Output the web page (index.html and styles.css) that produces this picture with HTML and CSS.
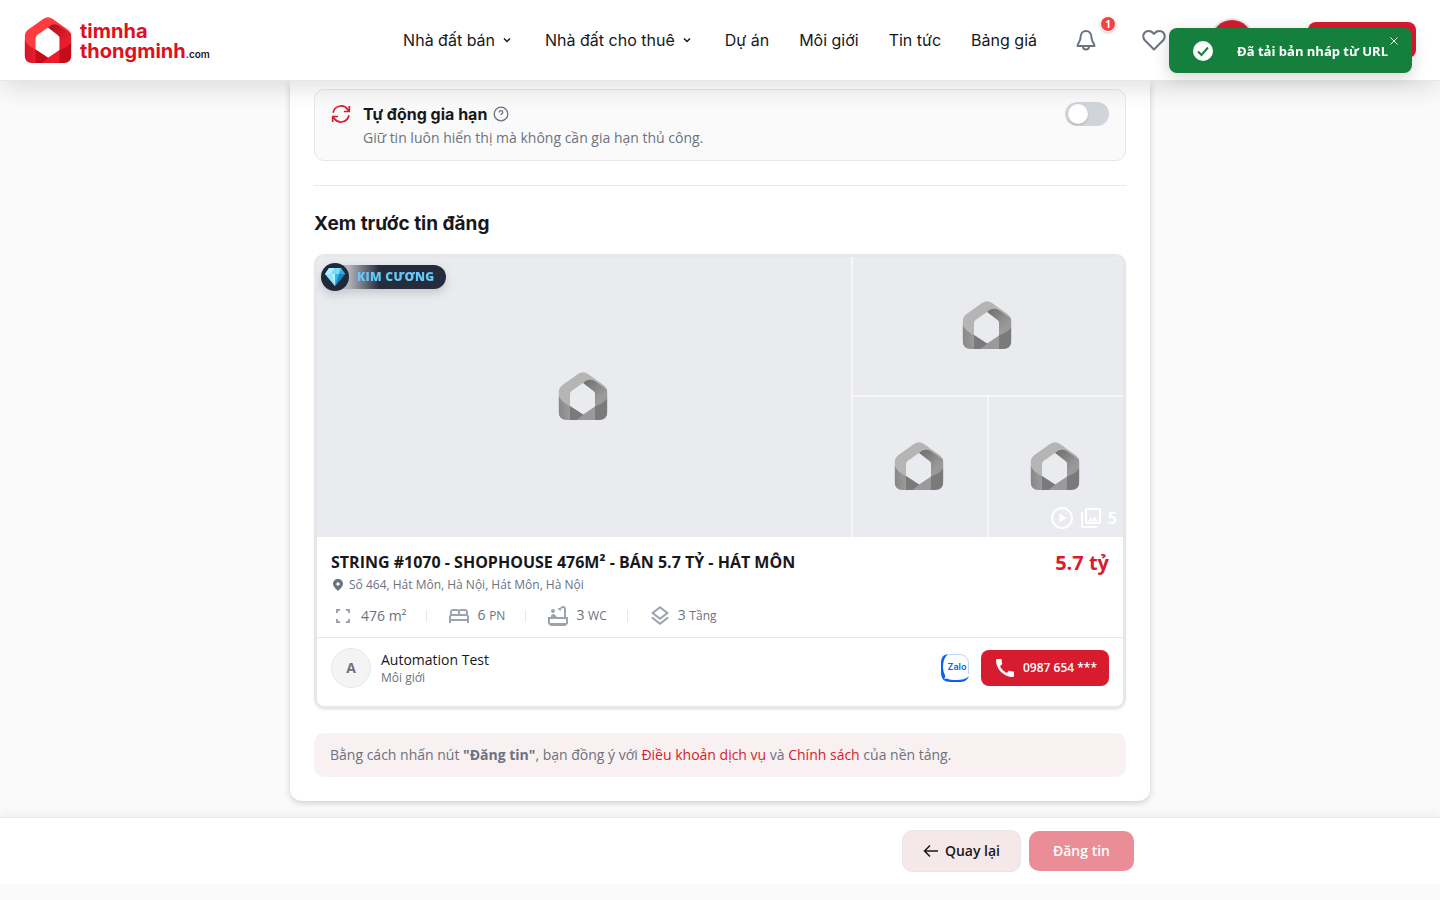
FILE: index.html
```html
<!DOCTYPE html>
<html lang="vi">
<head>
    <meta charset="UTF-8">
    <meta name="viewport" content="width=device-width, initial-scale=1.0">
    <title>Đăng tin - timnhathongminh.com</title>
    <link rel="stylesheet" href="styles.css">
</head>
<body>

    <!-- Shared house logo, coloured through CSS variables -->
    <svg class="sprite" aria-hidden="true">
        <defs>
            <linearGradient id="fold" x1="0" y1="0" x2="0.8" y2="1">
                <stop offset="0.1" stop-color="#000" stop-opacity="0.26"/>
                <stop offset="0.75" stop-color="#000" stop-opacity="0"/>
            </linearGradient>
            <linearGradient id="side" x1="1" y1="0" x2="0" y2="0">
                <stop offset="0" stop-color="#000" stop-opacity="0"/>
                <stop offset="1" stop-color="#000" stop-opacity="0.12"/>
            </linearGradient>
            <clipPath id="house-shape">
                <path clip-rule="evenodd" d="M19.500 2Q24.500-1.500 29.500 2L45 13Q49 16 49 21V39Q49 48 40 48H9Q0 48 0 39V21Q0 16 4 13ZM24.500 11L13 19Q11.500 20.500 11.500 22V34L24.500 42.500L36.500 34.500V22Q36.500 20.500 35 19Z"/>
            </clipPath>
        </defs>
        <symbol id="house" viewBox="0 0 49 48">
            <g clip-path="url(#house-shape)">
                <path fill="var(--house-light)" d="M0 0H49V48H0Z"/>
                <path fill="var(--house-mid)" d="M24.500 11Q29 6.500 34 8Q37 9 49 18V25Q48 30 36.500 35V20.500Z"/>
                <path fill="url(#fold)" d="M24.500 11Q29 6.500 34 8Q37 9 49 18V25Q48 30 36.500 35V20.500Z"/>
                <path fill="var(--house-mid)" d="M0 23Q2 30 11.500 34L25 42.500L36.500 34.500L40 48H0Z"/>
                <path fill="url(#side)" d="M0 23Q2 30 11.500 34V48H0Z"/>
                <path fill="var(--house-dark)" d="M11.500 33.500L25 42.500L18 48H11.500Z"/>
                <path fill="var(--house-dark)" d="M49 25Q48 30 36.500 34.500V48H49Z"/>
            </g>
        </symbol>
    </svg>

    <!-- Header -->
    <header class="header">
        <a href="#" class="logo">
            <svg class="logo-mark" aria-hidden="true"><use href="#house"/></svg>
            <span class="logo-text">timnha<br>thongminh<small>.com</small></span>
        </a>

        <nav class="nav">
            <a href="#">Nhà đất bán <svg width="16" height="16" viewBox="0 0 16 16"><path d="M5 6.500L8 9.500L11 6.500"/></svg></a>
            <a href="#">Nhà đất cho thuê <svg width="16" height="16" viewBox="0 0 16 16"><path d="M5 6.500L8 9.500L11 6.500"/></svg></a>
            <a href="#">Dự án</a>
            <a href="#">Môi giới</a>
            <a href="#">Tin tức</a>
            <a href="#">Bảng giá</a>
        </nav>

        <div class="actions">
            <button class="icon-button bell" aria-label="Thông báo">
                <svg width="24" height="24" viewBox="0 0 24 24"><path d="M6.500 9.500C6.500 5.500 9 3 12 3S17.500 5.500 17.500 9.500C17.500 13.500 20.500 15 20.500 18H3.500C3.500 15 6.500 13.500 6.500 9.500Z"/><path d="M9 18.500C9 20.500 10.200 21.500 12 21.500S15 20.500 15 18.500"/></svg>
                <span class="count">1</span>
            </button>
            <button class="icon-button heart" aria-label="Yêu thích">
                <svg width="24" height="24" viewBox="0 0 24 24"><path d="M12 21.500L2.800 12.300C-.5 8 2 3 6.700 3C9.500 3 11 4.500 12 6C13 4.500 14.500 3 17.300 3C22 3 24.500 8 21.200 12.300Z"/></svg>
            </button>
            <button class="user" aria-label="Tài khoản"></button>
            <button class="post" aria-label="Đăng tin"></button>
        </div>
    </header>

    <!-- Post form -->
    <main class="card">
        <section class="renew">
            <svg class="renew-icon" width="20" height="20" viewBox="0 0 24 24"><path d="M2.500 10.500A9.700 9.700 0 0 1 20 6.500L22 9M22 2.500V9H15.500M21.500 13.500A9.700 9.700 0 0 1 4 17.500L2 15M2 21.500V15H8.500"/></svg>
            <div class="renew-text">
                <div class="renew-title">
                    <label for="autoRenew">Tự động gia hạn</label>
                    <svg width="16" height="16" viewBox="0 0 16 16"><circle cx="8" cy="8" r="6.800"/><path d="M6.200 6.500Q6.200 4.700 8 4.700T9.800 6.300C9.800 7.700 8 7.600 8 9"/><path d="M8 11V11.300"/></svg>
                </div>
                <p>Giữ tin luôn hiển thị mà không cần gia hạn thủ công.</p>
            </div>
            <input type="checkbox" id="autoRenew" class="toggle">
        </section>

        <section class="preview">
            <h2>Xem trước tin đăng</h2>

            <article class="listing">
                <div class="gallery">
                    <div class="photo photo-main"><svg><use href="#house"/></svg></div>
                    <div class="photo photo-wide"><svg><use href="#house"/></svg></div>
                    <div class="photo"><svg><use href="#house"/></svg></div>
                    <div class="photo"><svg><use href="#house"/></svg></div>

                    <div class="tier">
                        <span class="tier-gem">
                            <svg width="20" height="18" viewBox="0 0 20 18">
                                <path fill="#38b6e8" d="M4 0H16L20 6L10 18L0 6Z"/>
                                <path fill="#b5f0ff" d="M4 0H10L6 6H0Z"/>
                                <path fill="#7bdcf8" d="M10 0H16L14 6H6Z"/>
                                <path fill="#3aa7dc" d="M16 0L20 6H14Z"/>
                                <path fill="#8ee6fb" d="M0 6H6L10 18Z"/>
                                <path fill="#b5f0ff" d="M6 6H10V18Z"/>
                                <path fill="#1685c4" d="M14 6H20L10 18Z"/>
                            </svg>
                        </span>
                        <span class="tier-name">KIM CƯƠNG</span>
                    </div>

                    <div class="media">
                        <svg width="24" height="24" viewBox="0 0 24 24"><circle cx="12" cy="12" r="10" fill="none" stroke="currentColor" stroke-width="2"/><path d="M9.500 7.500V16.500L16.500 12Z"/></svg>
                        <svg width="24" height="24" viewBox="0 0 24 24"><path d="M20 4V16H8V4H20M20 2H8C6.900 2 6 2.900 6 4V16C6 17.100 6.900 18 8 18H20C21.100 18 22 17.100 22 16V4C22 2.900 21.100 2 20 2ZM11.500 11.700L13.200 14L15.700 10.800L19 15H9ZM2 6V20C2 21.100 2.900 22 4 22H18V20H4V6Z"/></svg>
                        <span>5</span>
                    </div>
                </div>

                <div class="details">
                    <div class="headline">
                        <h3>STRING #1070 - SHOPHOUSE 476M² - BÁN 5.7 TỶ - HÁT MÔN</h3>
                        <strong class="price">5.7 tỷ</strong>
                    </div>
                    <div class="address">
                        <svg width="14" height="14" viewBox="0 0 14 14"><path fill-rule="evenodd" d="M7 1C9.900 1 12 3.100 12 5.800C12 8.500 9.500 11 7 13C4.500 11 2 8.500 2 5.800C2 3.100 4.100 1 7 1ZM7 4.300A1.700 1.700 0 1 0 7 7.700A1.700 1.700 0 1 0 7 4.300Z"/></svg>
                        Số 464, Hát Môn, Hà Nội, Hát Môn, Hà Nội
                    </div>
                    <ul class="specs">
                        <li>
                            <svg width="24" height="24" viewBox="0 0 24 24"><path d="M5 9V5H9V7H7V9ZM15 5H19V9H17V7H15ZM5 15H7V17H9V19H5ZM17 15H19V19H15V17H17Z"/></svg>
                            <span>476 m²</span>
                        </li>
                        <li>
                            <svg width="24" height="24" viewBox="0 0 24 24"><path d="M21 10.780V8C21 6.350 19.650 5 18 5H14C13.230 5 12.530 5.300 12 5.780C11.470 5.300 10.770 5 10 5H6C4.350 5 3 6.350 3 8V10.780C2.390 11.330 2 12.120 2 13V19H4V17H20V19H22V13C22 12.120 21.610 11.330 21 10.780ZM14 7H18C18.550 7 19 7.450 19 8V10H13V8C13 7.450 13.450 7 14 7ZM5 8C5 7.450 5.450 7 6 7H10C10.550 7 11 7.450 11 8V10H5ZM4 15V13C4 12.450 4.450 12 5 12H19C19.550 12 20 12.450 20 13V15Z"/></svg>
                            <span>6 <small>PN</small></span>
                        </li>
                        <li>
                            <svg width="24" height="24" viewBox="0 0 24 24"><circle cx="7" cy="7" r="2"/><path d="M20 13V4.830C20 3.270 18.730 2 17.170 2C16.420 2 15.700 2.300 15.170 2.830L13.920 4.080C13.100 3.850 12.240 4 11.590 4.500L14.350 7.260C14.850 6.600 15 5.750 14.770 4.930L16.580 4.240C17.160 3.660 18 4.070 18 4.830V13H11.150C10.850 12.790 10.580 12.550 10.330 12.280L8.930 10.730C8.740 10.520 8.500 10.350 8.240 10.230C6.620 9.540 5 10.710 5 12.250V13H2V19C2 20.100 2.900 21 4 21C4 21.550 4.450 22 5 22H19C19.550 22 20 21.550 20 21C21.100 21 22 20.100 22 19V13ZM20 19H4V15H20Z"/></svg>
                            <span>3 <small>WC</small></span>
                        </li>
                        <li>
                            <svg width="24" height="24" viewBox="0 0 24 24"><path d="M11.990 18.540L4.620 12.810L3 14.070L12 21.070L21 14.070L19.370 12.800ZM12 16L19.360 10.270L21 9L12 2L3 9L4.630 10.270ZM12 4.530L17.740 9L12 13.470L6.260 9Z"/></svg>
                            <span>3 <small>Tầng</small></span>
                        </li>
                    </ul>
                </div>

                <div class="agent">
                    <span class="agent-avatar">A</span>
                    <div class="agent-name">
                        <span>Automation Test</span>
                        <small>Môi giới</small>
                    </div>
                    <a href="#" class="zalo">
                        <svg width="28" height="28" viewBox="0 0 28 28">
                            <path fill="#0a62f3" d="M7 0C2 1 0 3 0 10V18C0 25 3 28 10 28H18C23 28 26 27 28 22C25 25 21 26 15 26C11 26 8 25.500 6 24.500L3 25Q5 23 4 21C1 16 1 5 7 0Z"/>
                            <path fill="none" stroke="#8dbbf8" stroke-width="0.600" d="M7 1Q9 .5 12 .5H18Q26 .5 27.500 8V20"/>
                        </svg>
                        <span>Zalo</span>
                    </a>
                    <button class="phone">
                        <svg width="24" height="24" viewBox="0 0 24 24"><path d="M20.010 15.380C18.780 15.380 17.590 15.180 16.480 14.820C16.130 14.700 15.740 14.790 15.470 15.060L13.900 17.030C11.070 15.680 8.420 13.130 7.010 10.200L8.960 8.540C9.230 8.260 9.310 7.870 9.200 7.520C8.830 6.410 8.640 5.220 8.640 3.990C8.640 3.450 8.190 3 7.650 3H4.190C3.650 3 3 3.240 3 3.990C3 13.280 10.730 21 20.010 21C20.720 21 21 20.370 21 19.820V16.370C21 15.830 20.550 15.380 20.010 15.380Z"/></svg>
                        0987 654 ***
                    </button>
                </div>
            </article>
        </section>

        <p class="terms">Bằng cách nhấn nút <strong>"Đăng tin"</strong>, bạn đồng ý với <a href="#">Điều khoản dịch vụ</a> và <a href="#">Chính sách</a> của nền tảng.</p>
    </main>

    <!-- Form actions -->
    <footer class="bottom-bar">
        <div class="bottom-inner">
            <button class="back-button">
                <svg width="16" height="16" viewBox="0 0 16 16"><path d="M15 8H2M7 2.500L1.500 8L7 13.500"/></svg>
                Quay lại
            </button>
            <button class="submit-button" disabled>Đăng tin</button>
        </div>
    </footer>

    <!-- Toast -->
    <div class="toast" role="status">
        <svg width="20" height="20" viewBox="0 0 20 20"><circle cx="10" cy="10" r="10" fill="#fff"/><path d="M5 10.500L8.500 14L15 6.500" fill="none" stroke="#15803d" stroke-width="2"/></svg>
        <span>Đã tải bản nháp từ URL</span>
        <button class="toast-close" aria-label="Đóng">
            <svg width="8" height="8" viewBox="0 0 8 8"><path d="M.5 .5L7.500 7.500M7.500 .5L.5 7.500"/></svg>
        </button>
    </div>

</body>
</html>
```
FILE: styles.css
```css
* {
    box-sizing: border-box;
}

body {
    font-family: "Open Sans", "Noto Sans", sans-serif;
    font-size: 14px;
    line-height: 20px;
    margin: 0;
    color: #18181b;
    background-color: #fafafa;
}

h2, h3, p, ul {
    margin: 0;
    padding: 0;
}

a {
    color: inherit;
    text-decoration: none;
}

button {
    font: inherit;
    border: none;
    padding: 0;
    cursor: pointer;
}

svg {
    display: block;
    flex-shrink: 0;
}

.sprite {
    position: absolute;
    width: 0;
    height: 0;
}

/* Header */
.header {
    position: sticky;
    top: 0;
    z-index: 10;
    display: flex;
    align-items: center;
    height: 81px;
    padding: 0 24px;
    background-color: #ffffff;
    border-bottom: 1px solid #e5e7eb;
    box-shadow: 0 10px 25px -3px rgba(0, 0, 0, 0.12);
}

.logo {
    display: flex;
    align-items: center;
    gap: 8px;
    color: #e01020;
}

.logo-mark {
    width: 48px;
    height: 46px;
    --house-light: #ff3b40;
    --house-mid: #ea1c2c;
    --house-dark: #c40c1a;
}

.logo-text {
    padding-top: 4px;
    font-family: Inter, sans-serif;
    font-size: 20px;
    font-weight: 700;
    line-height: 20px;
}

.logo-text small {
    font-size: 10px;
    font-weight: 600;
    color: #18181b;
}

.nav {
    display: flex;
    gap: 30px;
    margin-left: auto;
    font-family: Inter, sans-serif;
    font-size: 16px;
    line-height: 24px;
    white-space: nowrap;
}

.nav a {
    display: flex;
    align-items: center;
    gap: 4px;
}

.nav svg {
    fill: none;
    stroke: currentColor;
    stroke-width: 1.5;
}

.actions {
    display: flex;
    align-items: center;
    margin-left: 37px;
}

.icon-button {
    position: relative;
    background: none;
}

.icon-button svg {
    fill: none;
    stroke: #6b7280;
    stroke-width: 2;
    stroke-linejoin: round;
}

.heart {
    margin-left: 44px;
}

.count {
    position: absolute;
    top: -12px;
    right: -18px;
    width: 16px;
    height: 16px;
    border: 1px solid #ffffff;
    border-radius: 50%;
    background-color: #ef4444;
    color: #ffffff;
    font-size: 10px;
    font-weight: 700;
    line-height: 14px;
    box-shadow: 0 1px 3px rgba(0, 0, 0, 0.2);
}

.user {
    width: 40px;
    height: 40px;
    margin-left: 46px;
    border-radius: 50%;
    background-color: #d61c2e;
    box-shadow: 0 0 0 2px #e5e7eb;
}

.post {
    width: 108px;
    height: 36px;
    margin-left: 56px;
    border-radius: 8px;
    background-color: #d61c2e;
}

/* Form card */
.card {
    max-width: 860px;
    margin: 0 auto 16px;
    padding: 8px 24px 24px;
    background-color: #ffffff;
    border-radius: 0 0 12px 12px;
    box-shadow: 0 2px 6px rgba(0, 0, 0, 0.18);
}

.renew {
    display: flex;
    align-items: flex-start;
    gap: 12px;
    padding: 12px 16px;
    background-color: #fafafa;
    border: 1px solid #e5e7eb;
    border-radius: 10px;
}

.renew-icon {
    margin-top: 2px;
    fill: none;
    stroke: #d61c2e;
    stroke-width: 2;
}

.renew-text {
    flex: 1;
}

.renew-title {
    display: flex;
    align-items: center;
    gap: 6px;
    margin-bottom: 2px;
    font-family: Inter, sans-serif;
    font-size: 16px;
    font-weight: 700;
    line-height: 24px;
}

.renew-title svg {
    fill: none;
    stroke: #6b7280;
    stroke-width: 1.3;
}

.renew p {
    color: #6b7280;
}

.toggle {
    appearance: none;
    width: 44px;
    height: 24px;
    margin: 0;
    padding: 2px 3px;
    border-radius: 12px;
    background-color: #d1d5db;
    cursor: pointer;
}

.toggle::before {
    content: "";
    display: block;
    width: 20px;
    height: 20px;
    border-radius: 50%;
    background-color: #ffffff;
    box-shadow: 0 1px 2px rgba(0, 0, 0, 0.2);
}

.toggle:checked {
    padding-left: 21px;
    background-color: #d61c2e;
}

.preview {
    margin: 24px 0;
    padding-top: 24px;
    border-top: 1px solid #e5e7eb;
}

.preview h2 {
    margin-bottom: 16px;
    font-family: Inter, sans-serif;
    font-size: 19px;
    line-height: 28px;
}

/* Listing preview */
.listing {
    overflow: hidden;
    border: 3px solid #e5e7eb;
    border-radius: 10px;
    box-shadow: 0 1px 2px rgba(0, 0, 0, 0.08);
}

.gallery {
    position: relative;
    display: grid;
    grid-template-columns: 1fr 134px 134px;
    grid-template-rows: 138px 140px;
    gap: 2px;
    background-color: #f7f7f8;
}

.photo {
    display: flex;
    align-items: center;
    justify-content: center;
    padding: 0 2px 2px 0;
    background-color: #eaebef;
    --house-light: #b5b5b5;
    --house-mid: #9a9a9a;
    --house-dark: #7a7a7a;
}

.photo svg {
    width: 50px;
    height: 48px;
}

.photo-main {
    grid-row: span 2;
}

.photo-wide {
    grid-column: span 2;
}

.tier {
    position: absolute;
    top: 6px;
    left: 4px;
    display: flex;
    align-items: center;
    filter: drop-shadow(0 4px 5px rgba(0, 0, 0, 0.15));
}

.tier-gem {
    z-index: 1;
    display: flex;
    align-items: center;
    justify-content: center;
    width: 28px;
    height: 28px;
    border-radius: 50%;
    background-color: #1f2937;
}

.tier-name {
    padding: 0 12px 0 22px;
    margin-left: -14px;
    border-radius: 0 12px 12px 0;
    background: linear-gradient(to right, #b4b6bb 12%, #252c3b 40%);
    color: #67c8f7;
    font-size: 12px;
    font-weight: 800;
    letter-spacing: 0.025em;
    line-height: 24px;
}

.media {
    position: absolute;
    right: 6px;
    bottom: 7px;
    display: flex;
    align-items: center;
    gap: 5px;
    color: #ffffff;
    font-size: 16px;
    font-weight: 700;
    line-height: 24px;
}

.media svg {
    fill: currentColor;
}

.details {
    padding: 12px 14px 9px;
    border-bottom: 1px solid #e5e7eb;
}

.headline {
    display: flex;
    justify-content: space-between;
    gap: 16px;
}

.headline h3 {
    font-size: 16px;
    line-height: 26px;
}

.price {
    color: #d61c2e;
    font-size: 20px;
    line-height: 28px;
}

.address {
    display: flex;
    align-items: center;
    gap: 4px;
    color: #6b7280;
    font-size: 12px;
    line-height: 16px;
}

.address svg {
    fill: #6b7280;
}

.specs {
    display: flex;
    margin-top: 10px;
    color: #6b7280;
    list-style: none;
}

.specs li {
    display: flex;
    align-items: center;
    gap: 6px;
    line-height: 24px;
}

.specs li + li::before {
    content: "";
    width: 1px;
    height: 12px;
    margin: 0 14px 0 20px;
    background-color: #e5e7eb;
}

.specs svg {
    fill: #9ca3af;
}

.specs small {
    font-size: 12px;
}

.agent {
    display: flex;
    align-items: center;
    padding: 10px 14px 18px;
}

.agent-avatar {
    width: 40px;
    height: 40px;
    border: 1px solid #e5e7eb;
    border-radius: 50%;
    background-color: #f4f4f5;
    color: #6b7280;
    font-weight: 700;
    line-height: 38px;
    text-align: center;
}

.agent-name {
    display: flex;
    flex: 1;
    flex-direction: column;
    margin-left: 10px;
}

.agent-name small {
    color: #6b7280;
    font-size: 12px;
    line-height: 16px;
}

.zalo {
    position: relative;
    margin-right: 12px;
}

.zalo span {
    position: absolute;
    inset: 0;
    padding-left: 4px;
    color: #0a62f3;
    font-family: Inter, sans-serif;
    font-size: 9px;
    font-weight: 600;
    line-height: 26px;
    text-align: center;
}

.phone {
    display: flex;
    align-items: center;
    gap: 6px;
    height: 36px;
    padding: 0 12px;
    border-radius: 8px;
    background-color: #d61c2e;
    color: #ffffff;
    font-size: 12px;
    font-weight: 600;
}

.phone svg {
    fill: #ffffff;
}

.terms {
    padding: 12px 16px;
    border-radius: 10px;
    background-color: #f9f0f1;
    color: #6b7280;
}

.terms a {
    color: #d61c2e;
}

/* Bottom action bar */
.bottom-bar {
    padding: 12px 0;
    background-color: #ffffff;
    border-top: 1px solid #e5e7eb;
    box-shadow: 0 -4px 8px rgba(0, 0, 0, 0.04);
}

.bottom-inner {
    display: flex;
    align-items: center;
    justify-content: flex-end;
    gap: 8px;
    max-width: 860px;
    margin: 0 auto;
    padding: 0 16px;
}

.back-button, .submit-button {
    display: flex;
    align-items: center;
    gap: 6px;
    border-radius: 10px;
    font-weight: 600;
}

.back-button {
    height: 42px;
    padding: 0 20px;
    border: 1px solid #e5e7eb;
    background-color: #f5e8e9;
    color: #18181b;
}

.back-button svg {
    fill: none;
    stroke: currentColor;
    stroke-width: 1.5;
}

.submit-button {
    height: 40px;
    padding: 0 24px;
    background-color: #ea8d96;
    color: #ffffff;
    cursor: not-allowed;
}

/* Toast over the header */
.toast {
    position: fixed;
    top: 28px;
    right: 28px;
    z-index: 20;
    display: flex;
    align-items: center;
    gap: 24px;
    height: 45px;
    padding: 0 24px;
    border-radius: 8px;
    background-color: #15803d;
    color: #ffffff;
    font-size: 13px;
    font-weight: 700;
    box-shadow: 0 4px 16px rgba(0, 0, 0, 0.18);
}

.toast-close {
    position: absolute;
    top: 9px;
    right: 14px;
    background: none;
}

.toast-close svg {
    fill: none;
    stroke: #ffffff;
    stroke-width: 1;
}
```
